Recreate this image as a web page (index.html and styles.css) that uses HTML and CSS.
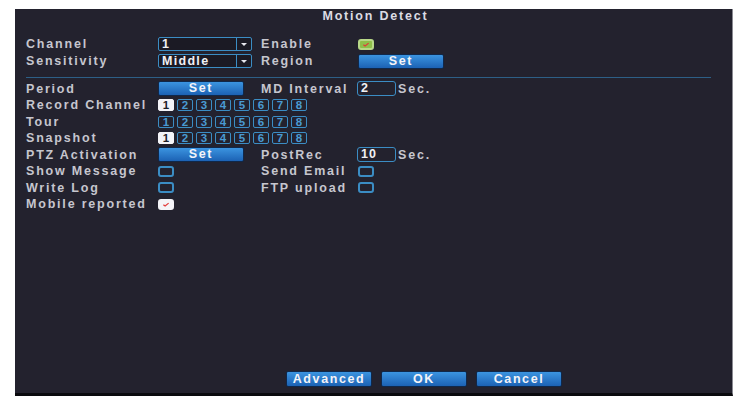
FILE: index.html
```html
<!DOCTYPE html>
<html lang="en">
<head>
    <meta charset="UTF-8">
    <title>Motion Detect</title>
    <link rel="stylesheet" href="styles.css">
</head>
<body>
    <div class="panel">
        <div class="title">Motion Detect</div>

        <div class="rows top-rows">
            <div class="row">
                <span class="label">Channel</span>
                <div class="select"><span class="select-value">1</span><span class="select-arrow"></span></div>
                <span class="label">Enable</span>
                <span class="check green"><svg viewBox="0 0 10 8"><path d="M2 4.2 L4 5.8 L8 2.4" /></svg></span>
            </div>
            <div class="row">
                <span class="label">Sensitivity</span>
                <div class="select"><span class="select-value">Middle</span><span class="select-arrow"></span></div>
                <span class="label">Region</span>
                <button class="btn">Set</button>
            </div>
        </div>

        <div class="separator"></div>

        <div class="rows">
            <div class="row">
                <span class="label">Period</span>
                <button class="btn">Set</button>
                <span class="label">MD Interval</span>
                <span class="num-field"><span class="num">2</span><span class="unit">Sec.</span></span>
            </div>
            <div class="row">
                <span class="label">Record Channel</span>
                <div class="channels">
                    <span class="ch on">1</span><span class="ch">2</span><span class="ch">3</span><span class="ch">4</span><span class="ch">5</span><span class="ch">6</span><span class="ch">7</span><span class="ch">8</span>
                </div>
            </div>
            <div class="row">
                <span class="label">Tour</span>
                <div class="channels">
                    <span class="ch">1</span><span class="ch">2</span><span class="ch">3</span><span class="ch">4</span><span class="ch">5</span><span class="ch">6</span><span class="ch">7</span><span class="ch">8</span>
                </div>
            </div>
            <div class="row">
                <span class="label">Snapshot</span>
                <div class="channels">
                    <span class="ch on">1</span><span class="ch">2</span><span class="ch">3</span><span class="ch">4</span><span class="ch">5</span><span class="ch">6</span><span class="ch">7</span><span class="ch">8</span>
                </div>
            </div>
            <div class="row">
                <span class="label">PTZ Activation</span>
                <button class="btn">Set</button>
                <span class="label">PostRec</span>
                <span class="num-field"><span class="num">10</span><span class="unit">Sec.</span></span>
            </div>
            <div class="row">
                <span class="label">Show Message</span>
                <span class="check"></span>
                <span class="label">Send Email</span>
                <span class="check"></span>
            </div>
            <div class="row">
                <span class="label">Write Log</span>
                <span class="check"></span>
                <span class="label">FTP upload</span>
                <span class="check"></span>
            </div>
            <div class="row">
                <span class="label">Mobile reported</span>
                <span class="check white"><svg viewBox="0 0 10 8"><path d="M2 4.2 L4 5.8 L8 2.4" /></svg></span>
            </div>
        </div>

        <div class="footer">
            <button class="btn small">Advanced</button>
            <button class="btn small">OK</button>
            <button class="btn small">Cancel</button>
        </div>
    </div>
</body>
</html>
```

FILE: styles.css
```css
/* Page */
body {
    margin: 0;
    background: #ffffff;
    font-family: "Liberation Sans", Arial, sans-serif;
}

/* Dialog panel */
.panel {
    margin: 9px 0 0 15px;
    width: 717px;
    height: 384px;
    background-color: #23222e;
    border-right: 1px solid #8a8a92;
    border-bottom: 3px solid #0a0a0e;
    display: flex;
    flex-direction: column;
    color: #d2d2da;
}

.title {
    height: 14px;
    line-height: 14px;
    text-align: center;
    font-weight: bold;
    font-size: 12.5px;
    letter-spacing: 1.8px;
    color: #dcdce4;
    padding-left: 4px;
}

.top-rows { margin-top: 12.5px; }

.separator {
    height: 1px;
    margin: 7px 21px 3px 11px;
    background-color: #2d5f86;
}

/* Form rows */
.rows { padding-left: 11px; }
.row {
    display: grid;
    grid-template-columns: 132px 103px 97px 1fr;
    align-items: center;
    height: 16.5px;
}
.top-rows .row { height: 17px; }

.label {
    font-size: 12.5px;
    font-weight: bold;
    letter-spacing: 1.8px;
    color: #c6c6ce;
    white-space: nowrap;
}

/* Dropdown */
.select {
    display: flex;
    width: 92px;
    height: 12px;
    border: 1px solid #3b8dc4;
    border-radius: 2px;
    background-color: #1b1a24;
}
.select-value {
    flex: 1;
    padding-left: 3px;
    font-size: 12.5px;
    font-weight: bold;
    letter-spacing: 1.3px;
    line-height: 12px;
    color: #f0f0f4;
    border-right: 1px solid #3b8dc4;
}
.select-arrow {
    width: 14px;
    display: flex;
    align-items: center;
    justify-content: center;
}
.select-arrow::after {
    content: "";
    border-left: 3px solid transparent;
    border-right: 3px solid transparent;
    border-top: 3px solid #e8e8ee;
}

/* Blue buttons */
.btn {
    width: 86px;
    height: 15px;
    padding: 0;
    border: 1px solid #10284a;
    border-radius: 2px;
    background: linear-gradient(#3b94e0, #1c62b4);
    color: #f4f4f8;
    font-family: "Liberation Sans", Arial, sans-serif;
    font-size: 12.5px;
    font-weight: bold;
    letter-spacing: 1.6px;
    line-height: 13px;
}
.btn.small { height: 16px; }

/* Number input */
.num-field { display: flex; align-items: center; margin-left: -1px; }
.num {
    width: 34px;
    height: 13px;
    padding-left: 3px;
    border: 1px solid #3b8dc4;
    border-radius: 3px;
    font-size: 12.5px;
    font-weight: bold;
    letter-spacing: 1px;
    line-height: 13px;
    color: #f0f0f4;
}
.unit {
    margin-left: 2px;
    font-size: 12.5px;
    font-weight: bold;
    letter-spacing: 1.8px;
    color: #c6c6ce;
}

/* Channel toggles */
.channels { display: flex; gap: 3px; grid-column: 2 / 5; }
.ch {
    width: 14px;
    height: 10px;
    border: 1px solid #3b8dc4;
    border-radius: 2px;
    font-size: 11.5px;
    font-weight: bold;
    line-height: 10px;
    text-align: center;
    color: #4a9ad2;
}
.ch.on {
    background-color: #f4f4f8;
    border-color: #f4f4f8;
    color: #1e1e28;
}

/* Checkboxes */
.check {
    width: 12px;
    height: 7px;
    border: 2px solid #3b8dc4;
    border-radius: 3px;
    display: flex;
    align-items: center;
    justify-content: center;
}
.check svg { width: 10px; height: 7px; }
.check svg path { fill: none; stroke: #e23a3a; stroke-width: 1.4; }
.check.green { background-color: #8fbf4a; border-color: #b8d888; }
.check.white { background-color: #f4f4f8; border-color: #f4f4f8; }

/* Footer buttons */
.footer {
    margin-top: auto;
    margin-bottom: 6px;
    padding-left: 271px;
    display: flex;
    gap: 9px;
}
```
